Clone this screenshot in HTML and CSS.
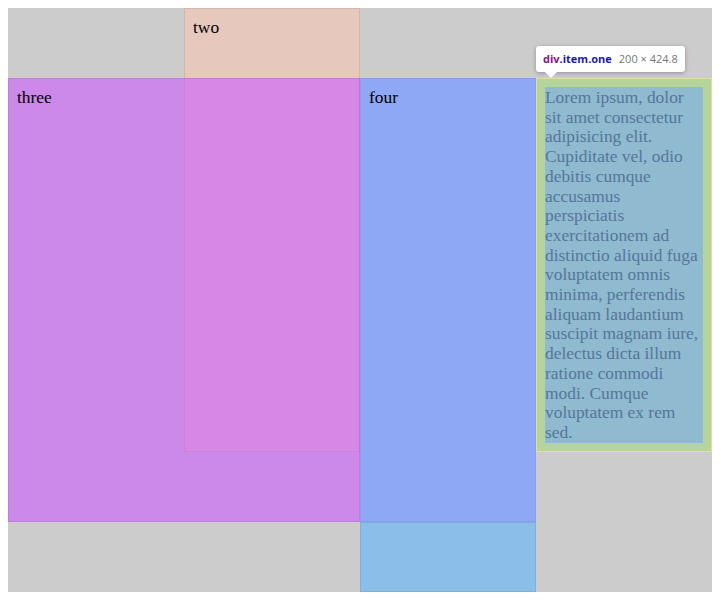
FILE: index.html
```html
<!DOCTYPE html>
<html>
<head>
<meta charset="utf-8">
<link rel="stylesheet" href="styles.css">
</head>
<body>
<div class="grid">
  <div class="item one">Lorem ipsum, dolor sit amet consectetur adipisicing elit. Cupiditate vel, odio debitis cumque accusamus perspiciatis exercitationem ad distinctio aliquid fuga voluptatem omnis minima, perferendis aliquam laudantium suscipit magnam iure, delectus dicta illum ratione commodi modi. Cumque voluptatem ex rem sed.</div>
  <div class="item two">two</div>
  <div class="item three">three</div>
  <div class="item four">four</div>
  <div class="item five"></div>
  <div class="tip"><span class="tag">div</span><span class="cls">.item.one</span><span class="dim">200 × 424.8</span></div>
</div>
</body>
</html>
```
FILE: styles.css
```css
body {
  margin: 8px;
  font-family: "Liberation Serif", "Times New Roman", serif;
  font-size: 17.4px;
  line-height: 19.7px;
  color: #000;
}
.grid {
  position: relative;
  display: grid;
  grid-template-columns: repeat(4, 176px);
  grid-template-rows: 70px 374px 70px 70px;
  width: 704px;
  background: #cccccc;
}
.item {
  border: 1px solid rgba(0, 0, 0, 0.1);
  padding: 9px 8px;
}
.one {
  grid-column: 4;
  grid-row: 2;
  border: 1px solid #e6dca2;
  padding: 9px 8px;
  background: #8fbacf;
  box-shadow: inset 0 0 0 8px #b5d59a;
  background-clip: padding-box;
  color: #56769b;
}
.two {
  grid-column: 2;
  grid-row: 1 / 3;
  background: #e6c8bd;
  border-color: rgba(150, 90, 80, 0.18);
}
.three {
  grid-column: 1 / 3;
  grid-row: 2 / 4;
  background: rgba(204, 102, 250, 0.65);
  border-color: rgba(0, 0, 0, 0.08);
}
.four {
  grid-column: 3;
  grid-row: 2 / 4;
  background: #8ea8f5;
  border-color: rgba(0, 0, 0, 0.05);
}
.five {
  grid-column: 3;
  grid-row: 4;
  background: #8bbfea;
  border-color: rgba(0, 0, 0, 0.08);
}
.tip {
  position: absolute;
  left: 528px;
  top: 38px;
  height: 26px;
  box-sizing: border-box;
  padding: 0 7px;
  display: flex;
  align-items: center;
  background: #fff;
  border-radius: 3px;
  box-shadow: 0 1px 4px rgba(0, 0, 0, 0.3);
  font-family: "Open Sans", "DejaVu Sans", sans-serif;
  font-size: 11px;
  line-height: 14px;
  white-space: nowrap;
}
.tip::after {
  content: "";
  position: absolute;
  left: 9px;
  bottom: -6px;
  border-left: 6px solid transparent;
  border-right: 6px solid transparent;
  border-top: 6px solid #fff;
}
.tag {
  color: #881280;
  font-weight: 700;
}
.cls {
  color: #1a1aa6;
  font-weight: 700;
}
.dim {
  color: #777;
  margin-left: 7px;
}
```
